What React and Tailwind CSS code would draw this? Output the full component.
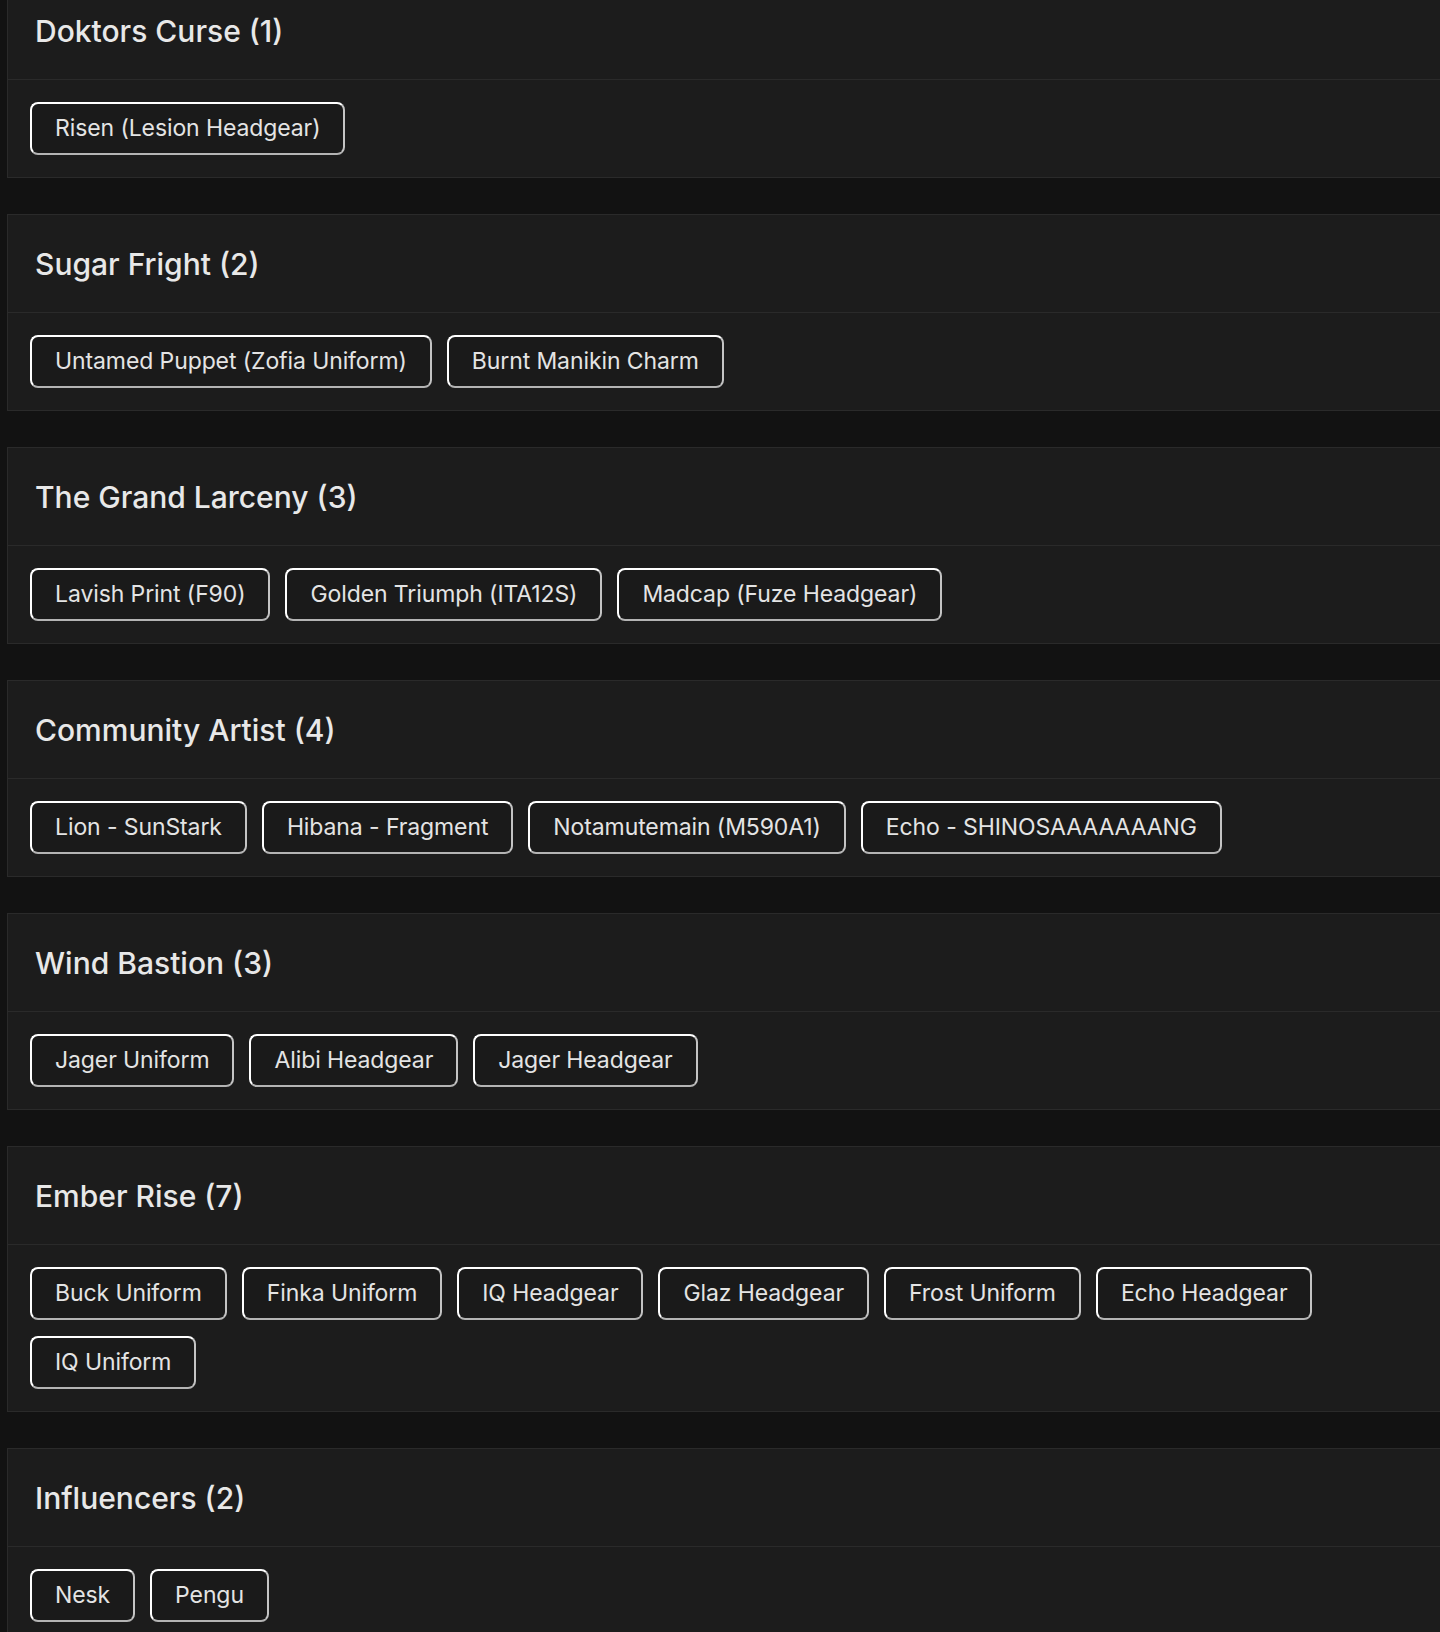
const collections = [
  { name: 'Doktors Curse', items: ['Risen (Lesion Headgear)'] },
  { name: 'Sugar Fright', items: ['Untamed Puppet (Zofia Uniform)', 'Burnt Manikin Charm'] },
  {
    name: 'The Grand Larceny',
    items: ['Lavish Print (F90)', 'Golden Triumph (ITA12S)', 'Madcap (Fuze Headgear)'],
  },
  {
    name: 'Community Artist',
    items: ['Lion - SunStark', 'Hibana - Fragment', 'Notamutemain (M590A1)', 'Echo - SHINOSAAAAAAANG'],
  },
  { name: 'Wind Bastion', items: ['Jager Uniform', 'Alibi Headgear', 'Jager Headgear'] },
  {
    name: 'Ember Rise',
    items: [
      'Buck Uniform',
      'Finka Uniform',
      'IQ Headgear',
      'Glaz Headgear',
      'Frost Uniform',
      'Echo Headgear',
      'IQ Uniform',
    ],
  },
  { name: 'Influencers', items: ['Nesk', 'Pengu'] },
];

function Chip({ label }) {
  return (
    <span className="h-[53px] flex items-center px-[23px] rounded-lg border-2 border-t-white border-l-white border-b-[#b4b4b4] border-r-[#c4c4c4] bg-[#1a1a1a] text-[23px] tracking-[-0.1px] text-[#e4e4e4] whitespace-nowrap">
      {label}
    </span>
  );
}

function CollectionCard({ name, items }) {
  return (
    <section className="border border-[#2a2a2a] bg-[#1c1c1c] -mr-4">
      <div className="h-[98px] flex items-center px-[27px] border-b border-[#2a2a2a]">
        <h2 className="text-[30px] font-medium text-[#e8e8e8] leading-none">
          {name} ({items.length})
        </h2>
      </div>
      <div className="flex flex-wrap gap-x-[15px] gap-y-4 pl-[22px] pr-[40px] pt-[22px] pb-[22px]">
        {items.map((item) => (
          <Chip key={item} label={item} />
        ))}
      </div>
    </section>
  );
}

export default function App() {
  return (
    <div
      className="h-[1632px] overflow-hidden bg-[#121212] pl-[7px]"
      style={{ fontFamily: 'Inter, "Open Sans", sans-serif' }}
    >
      <div className="-mt-[19px] flex flex-col gap-[36px]">
        {collections.map((c) => (
          <CollectionCard key={c.name} name={c.name} items={c.items} />
        ))}
      </div>
    </div>
  );
}
